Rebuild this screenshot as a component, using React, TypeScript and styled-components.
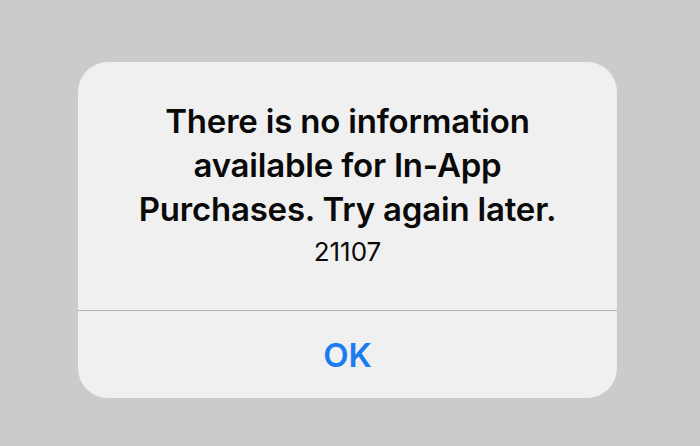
import styled, { createGlobalStyle } from "styled-components";

// page reset + grey backdrop behind the alert
const GlobalStyle = createGlobalStyle`
  html, body {
    margin: 0;
    padding: 0;
    background: #cbcbcb;
  }
  * {
    box-sizing: border-box;
  }
`;

const Screen = styled.div`
  width: 700px;
  height: 446px;
  padding: 62px 0 0 78px;
  background: #cbcbcb;
  font-family: Inter, "Noto Sans", "Liberation Sans", sans-serif;
`;

const Alert = styled.div`
  width: 539px;
  height: 336px;
  display: flex;
  flex-direction: column;
  background: #f0f0f0;
  border-radius: 30px;
  overflow: hidden;
`;

const Body = styled.div`
  flex: 1;
  display: flex;
  flex-direction: column;
  align-items: center;
  padding: 37px 40px 0;
  text-align: center;
`;

const Title = styled.div`
  font-size: 33px;
  font-weight: 600;
  line-height: 44px;
  color: #0a0a0a;
  letter-spacing: -0.2px;
`;

const Message = styled.div`
  margin-top: 4px;
  font-size: 26px;
  font-weight: 400;
  line-height: 34px;
  color: #0a0a0a;
`;

const Divider = styled.div`
  height: 1px;
  background: #b3b3b3;
`;

const Action = styled.button<{ $primary?: boolean }>`
  height: 87px;
  border: none;
  background: transparent;
  font-family: inherit;
  font-size: 33px;
  font-weight: ${({ $primary }) => ($primary ? 600 : 400)};
  color: #1b7cf0;
  cursor: pointer;
`;

export default function App() {
  return (
    <>
      <GlobalStyle />
      <Screen>
        <Alert>
          <Body>
            <Title>
              There is no information
              <br />
              available for In-App
              <br />
              Purchases. Try again later.
            </Title>
            <Message>21107</Message>
          </Body>
          <Divider />
          <Action $primary>OK</Action>
        </Alert>
      </Screen>
    </>
  );
}
